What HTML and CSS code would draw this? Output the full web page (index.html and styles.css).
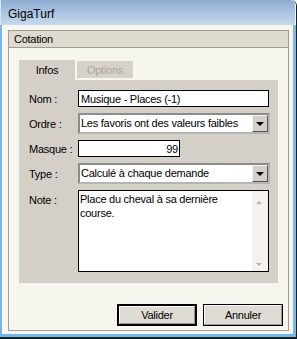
FILE: index.html
```html
<!DOCTYPE html>
<html lang="fr">
<head>
    <meta charset="UTF-8">
    <title>GigaTurf</title>
    <link rel="stylesheet" href="styles.css">
</head>
<body>

    <div class="window">
        <div class="titlebar">GigaTurf</div>

        <div class="client">
            <div class="group">
                <div class="group-head">Cotation</div>

                <div class="group-body">
                    <div class="tabs">
                        <div class="tab tab-on">Infos</div>
                        <div class="tab tab-off">Options</div>
                    </div>

                    <div class="panel">
                        <div class="row">
                            <span class="lbl">Nom :</span>
                            <div class="field field-wide">Musique - Places (-1)</div>
                        </div>
                        <div class="row">
                            <span class="lbl">Ordre :</span>
                            <div class="combo">
                                <span class="combo-text">Les favoris ont des valeurs faibles</span>
                                <span class="drop"><i></i></span>
                            </div>
                        </div>
                        <div class="row">
                            <span class="lbl">Masque :</span>
                            <div class="field field-num">99</div>
                        </div>
                        <div class="row">
                            <span class="lbl">Type :</span>
                            <div class="combo">
                                <span class="combo-text">Calculé à chaque demande</span>
                                <span class="drop"><i></i></span>
                            </div>
                        </div>
                        <div class="row row-top">
                            <span class="lbl lbl-note">Note :</span>
                            <div class="memo">
                                <div class="memo-text">Place du cheval à sa dernière course.</div>
                                <div class="scroll">
                                    <i class="arr-up"></i>
                                    <i class="arr-down"></i>
                                </div>
                            </div>
                        </div>
                    </div>

                    <div class="buttons">
                        <div class="btn btn-default"><span>Valider</span></div>
                        <div class="btn"><span>Annuler</span></div>
                    </div>
                </div>
            </div>
        </div>
    </div>

</body>
</html>
```

FILE: styles.css
```css
body {
    margin: 0;
    font-family: "Liberation Sans", Arial, sans-serif;
    font-size: 11px;
    letter-spacing: -0.25px;
    color: #000;
    background: #f6f5ee;
}
.window {
    width: 297px;
    height: 339px;
    box-sizing: border-box;
    border-right: 1px solid #1f1f1f;
    border-bottom: 2px solid #1f1f1f;
    border-top-right-radius: 6px;
    display: flex;
    flex-direction: column;
    overflow: hidden;
}
.titlebar {
    height: 25px;
    line-height: 28px;
    padding-left: 7px;
    font-size: 12px;
    letter-spacing: 0;
    background: linear-gradient(to bottom, #91acd3, #c5daef);
    border-left: 1px solid #d9e6f5;
    border-right: 1px solid #eef5fc;
    border-top-right-radius: 5px;
}
.client {
    flex: 1;
    display: flex;
    background-color: #f6f5ee;
    border-left: 2px solid #7fb2e2;
    border-right: 3px solid #78bdea;
    border-bottom: 3px solid #6cb8ea;
}
.group {
    flex: 1;
    display: flex;
    flex-direction: column;
    margin: 5px 4px 3px 6px;
    border: 1px solid #a29e96;
}
.group-head {
    height: 16px;
    line-height: 17px;
    padding-left: 5px;
    background-color: #dddad0;
    border-bottom: 1px solid #a29e96;
}
.group-body {
    flex: 1;
    padding: 12px 5px 0 10px;
}

.tabs {
    display: flex;
    align-items: flex-start;
    gap: 2px;
    height: 20px;
}
.tab {
    width: 56px;
    text-align: center;
    background-color: #d4d0c8;
}
.tab-on {
    height: 20px;
    line-height: 20px;
}
.tab-off {
    height: 17px;
    line-height: 18px;
    margin-top: 1px;
    color: #aca899;
    background-color: #d6d2ca;
}

.panel {
    width: 259px;
    box-sizing: border-box;
    padding: 10px 0 11px 10px;
    background-color: #d4d0c8;
    display: flex;
    flex-direction: column;
    gap: 6px;
}
.row {
    display: flex;
    align-items: center;
}
.row-top {
    align-items: flex-start;
}
.lbl {
    width: 49px;
}
.lbl-note {
    margin-top: 4px;
}
.field {
    height: 17px;
    line-height: 16px;
    box-sizing: border-box;
    border: 1px solid #000;
    background-color: #fff;
    padding-left: 2px;
    white-space: nowrap;
}
.field-wide {
    width: 191px;
}
.field-num {
    width: 102px;
    text-align: right;
    padding-right: 1px;
}
.combo {
    width: 192px;
    height: 21px;
    box-sizing: border-box;
    display: flex;
    align-items: stretch;
    background-color: #fff;
    border: 2px solid;
    border-color: #8c8c8c #b4b4b4 #b4b4b4 #8c8c8c;
}
.combo-text {
    flex: 1;
    padding-left: 1px;
    line-height: 17px;
    white-space: nowrap;
    overflow: hidden;
}
.drop {
    width: 16px;
    box-sizing: border-box;
    background-color: #d4d0c8;
    border: 1px solid;
    border-color: #f4f3ef #555 #555 #f4f3ef;
    display: flex;
    align-items: center;
    justify-content: center;
}
.drop i {
    width: 0;
    height: 0;
    border-left: 4px solid transparent;
    border-right: 4px solid transparent;
    border-top: 4px solid #000;
}
.memo {
    width: 191px;
    height: 82px;
    box-sizing: border-box;
    display: flex;
    border: 1px solid #000;
    background-color: #fff;
}
.memo-text {
    flex: 1;
    padding: 1px 2px 0 1px;
    line-height: 14px;
}
.scroll {
    width: 16px;
    background-color: #f3f2ec;
    position: relative;
}
.arr-up,
.arr-down {
    position: absolute;
    left: 4px;
    width: 0;
    height: 0;
    border-left: 3px solid transparent;
    border-right: 3px solid transparent;
}
.arr-up {
    top: 10px;
    border-bottom: 3px solid #b4b2aa;
}
.arr-down {
    bottom: 5px;
    border-top: 3px solid #b4b2aa;
}

.buttons {
    display: flex;
    justify-content: flex-end;
    gap: 6px;
    margin-top: 21px;
}
.btn {
    width: 80px;
    height: 22px;
    box-sizing: border-box;
    border: 1px solid #000;
    background-color: #dedbd2;
    display: flex;
}
.btn span {
    flex: 1;
    text-align: center;
    line-height: 18px;
    border: 1px solid;
    border-color: #fbfaf6 #9c988f #9c988f #fbfaf6;
}
.btn-default {
    border-width: 2px;
}
.btn-default span {
    line-height: 16px;
}
```
